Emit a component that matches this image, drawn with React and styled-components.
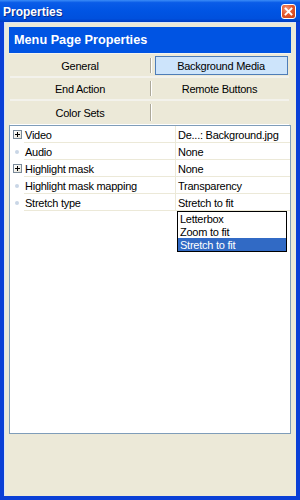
import React from "react";
import styled, { createGlobalStyle } from "styled-components";

const Global = createGlobalStyle`
  html, body { margin: 0; padding: 0; }
  body { width: 300px; height: 500px; overflow: hidden; font-family: "Liberation Sans", Arial, sans-serif; }
`;

const Window = styled.div`
  width: 300px;
  height: 500px;
  box-sizing: border-box;
  display: flex;
  flex-direction: column;
  background: #0a3fd6;
`;

const TitleBar = styled.div`
  height: 22px;
  flex: none;
  box-sizing: border-box;
  display: flex;
  align-items: center;
  justify-content: space-between;
  padding: 2px 4px 0 3px;
  background: linear-gradient(to bottom, #3b8cf7 0%, #0a5ce8 12%, #0054e3 50%, #0050dd 85%, #003cc0 100%);
`;

const TitleText = styled.span`
  color: #fff;
  font: bold 12px "Liberation Sans", Arial, sans-serif;
  text-shadow: 1px 1px 0 #0a2a8a;
`;

const CloseBtn = styled.div`
  width: 15px;
  height: 15px;
  box-sizing: border-box;
  border: 1px solid #fff;
  border-radius: 3px;
  background: radial-gradient(circle at 35% 30%, #f49a7c 0%, #e2592f 45%, #c93d12 100%);
  display: flex;
  align-items: center;
  justify-content: center;
  margin-top: -1px;
`;

const Client = styled.div`
  flex: 1;
  margin: 0 4px 4px 4px;
  background: #ece9d8;
  border-top: 1px solid #d8e4f8;
  border-left: 1px solid #d8e4f8;
  padding: 4px 4px 0 4px;
  display: flex;
  flex-direction: column;
`;

const Panel = styled.div`
  display: flex;
  flex-direction: column;
  width: 282px;
`;

const Header = styled.div`
  height: 26px;
  flex: none;
  background: #0054e3;
  color: #fff;
  font: bold 12.7px "Liberation Sans", Arial, sans-serif;
  display: flex;
  align-items: center;
  padding-left: 5px;
  border-bottom: 1px solid #f4f3ee;
`;

const Tabs = styled.div`
  display: grid;
  grid-template-columns: 140px 139px;
  margin: 0 2px 0 1px;
  padding-top: 1px;
  border-bottom: 1px solid #ffffff;
`;

const Tab = styled.div`
  position: relative;
  height: 23px;
  box-sizing: border-box;
  display: flex;
  align-items: center;
  justify-content: center;
  font-size: 11px;
  letter-spacing: -0.25px;
  color: #000;
  border-bottom: ${(p) => (p.$last ? "none" : "2px solid #f3f2ec")};
  ${(p) =>
    p.$right &&
    `
    &::before {
      content: "";
      position: absolute;
      left: 0;
      top: 3px;
      bottom: 3px;
      width: 1px;
      background: #aca899;
      box-shadow: 1px 0 0 #ffffff;
    }
  `}
`;

const TabFace = styled.span`
  display: flex;
  align-items: center;
  justify-content: center;
  box-sizing: border-box;
  ${(p) =>
    p.$active &&
    `
    width: 133px;
    height: 19px;
    margin-left: 3px;
    background: #cde4fb;
    border: 1px solid #4e7db8;
  `}
`;

const List = styled.div`
  height: 309px;
  width: 282px;
  box-sizing: border-box;
  border: 1px solid #7f9db9;
  background: #fff;
`;

const Row = styled.div`
  display: flex;
  height: 17px;
  font-size: 11px;
  letter-spacing: -0.25px;
  color: #000;
`;

const Gutter = styled.div`
  width: 14px;
  flex: none;
  display: flex;
  align-items: center;
  justify-content: center;
  padding-bottom: 1px;
  box-sizing: border-box;
`;

const Label = styled.div`
  width: 152px;
  flex: none;
  box-sizing: border-box;
  border-bottom: 1px solid #ece9d8;
  border-right: 1px solid #ece9d8;
  line-height: 18px;
  padding-left: 1px;
  white-space: nowrap;
`;

const Value = styled.div`
  position: relative;
  flex: 1;
  box-sizing: border-box;
  border-bottom: 1px solid #ece9d8;
  line-height: 18px;
  padding-left: 2px;
  white-space: nowrap;
`;

const PlusBox = styled.span`
  width: 9px;
  height: 9px;
  box-sizing: border-box;
  border: 1px solid #7a8a99;
  background: linear-gradient(135deg, #ffffff 0%, #e6e3d6 100%);
  position: relative;
  margin-top: 1px;
  &::before {
    content: "";
    position: absolute;
    left: 1px;
    right: 1px;
    top: 3px;
    height: 1px;
    background: #000;
  }
  &::after {
    content: "";
    position: absolute;
    top: 1px;
    bottom: 1px;
    left: 3px;
    width: 1px;
    background: #000;
  }
`;

const Dot = styled.span`
  width: 4px;
  height: 4px;
  border-radius: 50%;
  background: #c9d6e6;
  margin-top: 1px;
`;

const Dropdown = styled.div`
  position: absolute;
  top: 17px;
  left: 1px;
  width: 110px;
  box-sizing: border-box;
  border: 1px solid #000;
  background: #fff;
  display: flex;
  flex-direction: column;
  z-index: 2;
`;

const Option = styled.div`
  height: 13px;
  line-height: 14px;
  font-size: 11px;
  letter-spacing: -0.25px;
  padding-left: 2px;
  color: ${(p) => (p.$selected ? "#fff" : "#000")};
  background: ${(p) => (p.$selected ? "#316ac5" : "transparent")};
`;

const rows = [
  { label: "Video", value: "De...: Background.jpg", expand: true },
  { label: "Audio", value: "None" },
  { label: "Highlight mask", value: "None", expand: true },
  { label: "Highlight mask mapping", value: "Transparency" },
  { label: "Stretch type", value: "Stretch to fit", dropdown: true },
];

const tabs = [
  { label: "General" },
  { label: "Background Media", active: true },
  { label: "End Action" },
  { label: "Remote Buttons" },
  { label: "Color Sets" },
  { label: "" },
];

export default function App() {
  return (
    <>
      <Global />
      <Window>
        <TitleBar>
          <TitleText>Properties</TitleText>
          <CloseBtn>
            <svg width="9" height="9" viewBox="0 0 9 9">
              <path d="M1.5 1.5 L7.5 7.5 M7.5 1.5 L1.5 7.5" stroke="#fff" strokeWidth="1.8" strokeLinecap="square" />
            </svg>
          </CloseBtn>
        </TitleBar>
        <Client>
          <Panel>
            <Header>Menu Page Properties</Header>
            <Tabs>
              {tabs.map((t, i) => (
                <Tab key={i} $right={i % 2 === 1} $last={i >= 4}>
                  <TabFace $active={t.active}>{t.label}</TabFace>
                </Tab>
              ))}
            </Tabs>
            <List>
              {rows.map((r) => (
                <Row key={r.label}>
                  <Gutter>{r.expand ? <PlusBox /> : <Dot />}</Gutter>
                  <Label>{r.label}</Label>
                  <Value>
                    {r.value}
                    {r.dropdown && (
                      <Dropdown>
                        <Option>Letterbox</Option>
                        <Option>Zoom to fit</Option>
                        <Option $selected>Stretch to fit</Option>
                      </Dropdown>
                    )}
                  </Value>
                </Row>
              ))}
            </List>
          </Panel>
        </Client>
      </Window>
    </>
  );
}
